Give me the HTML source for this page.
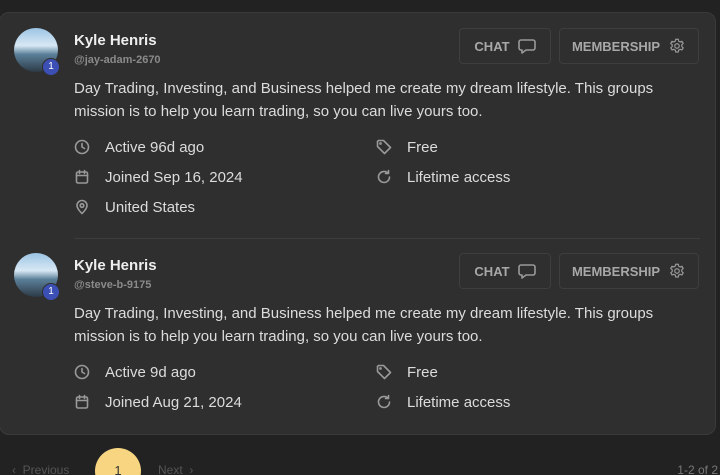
<!DOCTYPE html>
<html style="height:475px;overflow:hidden"><head><style>
body{margin:0;width:720px;height:475px;background:#222222;font-family:"Liberation Sans",Roboto,sans-serif;overflow:hidden;position:relative;color:#e6e6e6}
.card{position:absolute;left:-1px;top:12px;width:715px;height:421px;background:#2f2f2f;border:1px solid #3a3a3a;border-radius:10px}
.a{position:absolute}
.av{width:44px;height:44px;border-radius:50%;background:linear-gradient(180deg,#9cc4e4 0%,#d8e8f4 40%,#5a7f99 60%,#2c3a46 100%)}
.badge{width:16px;height:16px;border-radius:50%;background:#3c4fb4;color:#fff;font-size:10px;text-align:center;line-height:16px;border:1px solid #2f2f2f}
.name{font-size:15px;font-weight:bold;color:#eee}
.h{font-size:11px;color:#8a8a8a;font-weight:bold}
.d{font-size:15px;line-height:22.5px;color:#dcdcdc;width:620px}
.m{font-size:15px;color:#dcdcdc}
.btn{border:1px solid #3e3e3e;border-radius:4px;height:36px;box-sizing:border-box;font-size:13px;font-weight:bold;color:#a8a8a8;display:flex;align-items:center;justify-content:center;gap:8px}
svg{stroke:#999;fill:none;stroke-width:1.6;stroke-linecap:round;stroke-linejoin:round}
</style></head><body>
<div class="card"></div>
<div class="a av" style="left:14px;top:28px"></div>
<div class="a badge" style="left:42px;top:58px">1</div>
<div class="a name" style="left:74px;top:32px">Kyle Henris</div>
<div class="a h" style="left:74px;top:54px">@jay-adam-2670</div>
<div class="a btn" style="left:459px;top:28px;width:92px">CHAT <svg width="18" height="16" viewBox="0 0 18 16"><path d="M3 2h12a2 2 0 0 1 2 2v6a2 2 0 0 1-2 2H8l-4 3v-3H3a2 2 0 0 1-2-2V4a2 2 0 0 1 2-2z"/></svg></div>
<div class="a btn" style="left:559px;top:28px;width:140px">MEMBERSHIP <svg width="18" height="18" viewBox="0 0 24 24"><circle cx="12" cy="12" r="3"/><path d="M10.3 3h3.4l.5 2.5 2 1.1 2.4-.9 1.7 2.9-1.9 1.7v2.4l1.9 1.7-1.7 2.9-2.4-.9-2 1.1-.5 2.5h-3.4l-.5-2.5-2-1.1-2.4.9-1.7-2.9 1.9-1.7v-2.4L3.6 8.6l1.7-2.9 2.4.9 2-1.1z"/></svg></div>
<div class="a d" style="left:74px;top:78px">Day Trading, Investing, and Business helped me create my dream lifestyle. This groups mission is to help you learn trading, so you can live yours too.</div>
<svg class="a" style="left:74px;top:139px" width="16" height="16" viewBox="0 0 16 16"><circle cx="8" cy="8" r="6.5"/><path d="M8 4.5V8l2.5 1.5"/></svg>
<div class="a m" style="left:105px;top:139px">Active 96d ago</div>
<svg class="a" style="left:74px;top:169px" width="16" height="16" viewBox="0 0 16 16"><rect x="2.5" y="3" width="11" height="11" rx="1.5"/><path d="M2.5 6.5h11M5.5 1.5v3M10.5 1.5v3"/></svg>
<div class="a m" style="left:105px;top:169px">Joined Sep 16, 2024</div>
<svg class="a" style="left:74px;top:199px" width="16" height="16" viewBox="0 0 16 16"><path d="M8 14.5s-5-4.5-5-8a5 5 0 0 1 10 0c0 3.5-5 8-5 8z"/><circle cx="8" cy="6.5" r="1.8"/></svg>
<div class="a m" style="left:105px;top:199px">United States</div>
<svg class="a" style="left:376px;top:139px" width="16" height="16" viewBox="0 0 16 16"><path d="M1.5 2.5v5l7 7 6-6-7-7h-5z"/><circle cx="4.5" cy="4.5" r=".6"/></svg>
<div class="a m" style="left:407px;top:139px">Free</div>
<svg class="a" style="left:376px;top:169px" width="16" height="16" viewBox="0 0 16 16"><path d="M13.5 8a5.5 5.5 0 1 1-1.6-3.9M12.5 1.5v3h-3"/></svg>
<div class="a m" style="left:407px;top:169px">Lifetime access</div>
<div class="a" style="left:74px;top:238px;width:626px;height:1px;background:#3d3d3d"></div>
<div class="a av" style="left:14px;top:253px"></div>
<div class="a badge" style="left:42px;top:283px">1</div>
<div class="a name" style="left:74px;top:257px">Kyle Henris</div>
<div class="a h" style="left:74px;top:279px">@steve-b-9175</div>
<div class="a btn" style="left:459px;top:253px;width:92px">CHAT <svg width="18" height="16" viewBox="0 0 18 16"><path d="M3 2h12a2 2 0 0 1 2 2v6a2 2 0 0 1-2 2H8l-4 3v-3H3a2 2 0 0 1-2-2V4a2 2 0 0 1 2-2z"/></svg></div>
<div class="a btn" style="left:559px;top:253px;width:140px">MEMBERSHIP <svg width="18" height="18" viewBox="0 0 24 24"><circle cx="12" cy="12" r="3"/><path d="M10.3 3h3.4l.5 2.5 2 1.1 2.4-.9 1.7 2.9-1.9 1.7v2.4l1.9 1.7-1.7 2.9-2.4-.9-2 1.1-.5 2.5h-3.4l-.5-2.5-2-1.1-2.4.9-1.7-2.9 1.9-1.7v-2.4L3.6 8.6l1.7-2.9 2.4.9 2-1.1z"/></svg></div>
<div class="a d" style="left:74px;top:303px">Day Trading, Investing, and Business helped me create my dream lifestyle. This groups mission is to help you learn trading, so you can live yours too.</div>
<svg class="a" style="left:74px;top:364px" width="16" height="16" viewBox="0 0 16 16"><circle cx="8" cy="8" r="6.5"/><path d="M8 4.5V8l2.5 1.5"/></svg>
<div class="a m" style="left:105px;top:364px">Active 9d ago</div>
<svg class="a" style="left:74px;top:394px" width="16" height="16" viewBox="0 0 16 16"><rect x="2.5" y="3" width="11" height="11" rx="1.5"/><path d="M2.5 6.5h11M5.5 1.5v3M10.5 1.5v3"/></svg>
<div class="a m" style="left:105px;top:394px">Joined Aug 21, 2024</div>
<svg class="a" style="left:376px;top:364px" width="16" height="16" viewBox="0 0 16 16"><path d="M1.5 2.5v5l7 7 6-6-7-7h-5z"/><circle cx="4.5" cy="4.5" r=".6"/></svg>
<div class="a m" style="left:407px;top:364px">Free</div>
<svg class="a" style="left:376px;top:394px" width="16" height="16" viewBox="0 0 16 16"><path d="M13.5 8a5.5 5.5 0 1 1-1.6-3.9M12.5 1.5v3h-3"/></svg>
<div class="a m" style="left:407px;top:394px">Lifetime access</div>
<div class="a" style="left:12px;top:463px;font-size:12px;color:#555">&lsaquo;&nbsp; Previous</div>
<div class="a" style="left:95px;top:448px;width:46px;height:27px;overflow:hidden"><div style="width:46px;height:46px;border-radius:50%;background:#f8d580;color:#333;font-size:13px;text-align:center;line-height:46px">1</div></div>
<div class="a" style="left:158px;top:463px;font-size:12px;color:#555">Next &nbsp;&rsaquo;</div>
<div class="a" style="right:2px;top:463px;font-size:12px;color:#777">1-2 of 2</div>
</body></html>
